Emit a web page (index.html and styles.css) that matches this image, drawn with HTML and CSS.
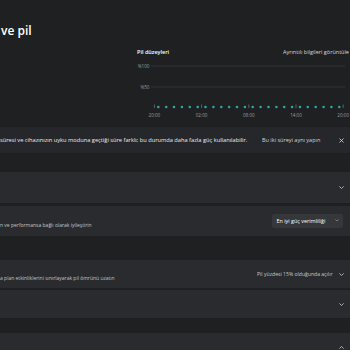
FILE: index.html
```html
<!DOCTYPE html>
<html>
<head>
  <title>Güç ve pil</title>
  <link rel="stylesheet" href="styles.css">
</head>
<body>
  <div class="top">
    <h1 class="title">ve pil</h1>

    <div class="chart">
      <div class="chart-head">
        <span class="chart-title">Pil düzeyleri</span>
        <span class="chart-link">Ayrıntılı bilgileri görüntüle</span>
      </div>
      <svg class="plot" width="213" height="60" viewBox="0 0 213 60">
        <text class="axis" x="12.5" y="7.6" text-anchor="end">%100</text>
        <line class="grid" x1="14" y1="6" x2="208" y2="6"/>
        <text class="axis" x="12.5" y="28.6" text-anchor="end">%50</text>
        <line class="grid" x1="14" y1="27" x2="208" y2="27"/>

        <g class="ticks">
          <line x1="17.4" y1="44.5" x2="17.4" y2="48"/>
          <line x1="64.6" y1="44.5" x2="64.6" y2="48"/>
          <line x1="111.8" y1="44.5" x2="111.8" y2="48"/>
          <line x1="159" y1="44.5" x2="159" y2="48"/>
          <line x1="206.2" y1="44.5" x2="206.2" y2="48"/>
        </g>

        <g class="dots">
          <circle cx="21.3" cy="47" r="1.3"/>
          <circle cx="29.2" cy="47" r="1.3"/>
          <circle cx="37" cy="47" r="1.3"/>
          <circle cx="44.9" cy="47" r="1.3"/>
          <circle cx="52.8" cy="47" r="1.3"/>
          <circle cx="60.7" cy="47" r="1.3"/>
          <circle cx="68.5" cy="47" r="1.3"/>
          <circle cx="76.4" cy="47" r="1.3"/>
          <circle cx="84.3" cy="47" r="1.3"/>
          <circle cx="92.1" cy="47" r="1.3"/>
          <circle cx="100" cy="47" r="1.3"/>
          <circle cx="107.9" cy="47" r="1.3"/>
          <circle cx="115.7" cy="47" r="1.3"/>
          <circle cx="123.6" cy="47" r="1.3"/>
          <circle cx="131.5" cy="47" r="1.3"/>
          <circle cx="139.4" cy="47" r="1.3"/>
          <circle cx="147.2" cy="47" r="1.3"/>
          <circle cx="155.1" cy="47" r="1.3"/>
          <circle cx="163" cy="47" r="1.3"/>
          <circle cx="170.8" cy="47" r="1.3"/>
          <circle cx="178.7" cy="47" r="1.3"/>
          <circle cx="186.6" cy="47" r="1.3"/>
          <circle cx="194.4" cy="47" r="1.3"/>
          <circle cx="202.3" cy="47" r="1.3"/>
        </g>

        <text class="axis" x="17.4" y="56.7" text-anchor="middle">20:00</text>
        <text class="axis" x="64.6" y="56.7" text-anchor="middle">02:00</text>
        <text class="axis" x="111.8" y="56.7" text-anchor="middle">08:00</text>
        <text class="axis" x="159" y="56.7" text-anchor="middle">14:00</text>
        <text class="axis" x="206.2" y="56.7" text-anchor="middle">20:00</text>
      </svg>
    </div>
  </div>

  <div class="banner">
    <span class="banner-text">süresi ve cihazınızın uyku moduna geçtiği süre farklı; bu durumda daha fazla güç kullanılabilir.</span>
    <span class="banner-action">Bu iki süreyi aynı yapın</span>
    <svg class="close" width="5" height="5" viewBox="0 0 5 5">
      <path d="M0.5 0.5L4.5 4.5M4.5 0.5L0.5 4.5"/>
    </svg>
  </div>

  <div class="cards">
    <div class="card card-a">
      <span class="desc"></span>
      <svg class="chevron" width="5" height="3" viewBox="0 0 5 3"><path d="M0.4 0.4L2.5 2.5L4.6 0.4"/></svg>
    </div>

    <div class="card card-b">
      <span class="desc">n ve performansa bağlı olarak iyileştirin</span>
      <div class="select">
        <span>En iyi güç verimliliği</span>
        <svg class="chevron small" width="4" height="2.5" viewBox="0 0 5 3"><path d="M0.4 0.4L2.5 2.5L4.6 0.4"/></svg>
      </div>
    </div>

    <div class="group">
      <div class="card card-c">
        <span class="desc">a plan etkinliklerini sınırlayarak pil ömrünü uzatın</span>
        <div class="right">
          <span class="status">Pil yüzdesi 15% olduğunda açılır</span>
          <svg class="chevron" width="5" height="3" viewBox="0 0 5 3"><path d="M0.4 0.4L2.5 2.5L4.6 0.4"/></svg>
        </div>
      </div>
      <div class="card card-d">
        <span class="desc"></span>
        <svg class="chevron" width="5" height="3" viewBox="0 0 5 3"><path d="M0.4 0.4L2.5 2.5L4.6 0.4"/></svg>
      </div>
    </div>

    <div class="card card-e">
      <span class="desc"></span>
      <svg class="chevron" width="5" height="3" viewBox="0 0 5 3"><path d="M0.4 2.6L2.5 0.5L4.6 2.6"/></svg>
    </div>
  </div>
</body>
</html>
```

FILE: styles.css
```css
body { margin: 0; width: 350px; height: 350px; overflow: hidden; background: #1f2022; color: #fff; font-family: "Open Sans", "Noto Sans", sans-serif; white-space: nowrap; }

.top { display: flex; height: 127px; }
.title { margin: 24px 0 0; padding-left: 1px; width: 136px; font-size: 12px; line-height: 14px; font-weight: 600; }

.chart { margin-top: 48px; width: 213px; }
.chart-head { display: grid; grid-template-columns: 146px auto; font-size: 5.5px; line-height: 8px; }
.chart-title { font-weight: 600; }
.chart-link { color: #d8d8d8; }
.plot { display: block; margin-top: 4px; overflow: visible; }
.axis { font-family: "Open Sans", sans-serif; font-size: 4.6px; fill: #9c9c9c; }
.grid { stroke: #3a3c3f; stroke-width: 0.7; }
.ticks line { stroke: #8a8a8a; stroke-width: 0.6; }
.dots circle { fill: #2fa5a1; }

.banner { display: grid; grid-template-columns: 262px 1fr auto; align-items: center; height: 26px; padding-right: 6px; background: #25272a; font-size: 5.7px; color: #ececec; }
.banner-action { color: #d4d4d4; font-size: 5.5px; }
.close path { stroke: #dcdcdc; stroke-width: 0.8; fill: none; }

.cards { display: flex; flex-direction: column; margin-top: 19px; }
.card { display: flex; align-items: center; justify-content: space-between; padding-right: 6.5px; background: #2a2b2e; }
.card-a { height: 31px; }
.card-b { height: 30px; margin-top: 3px; }
.group { display: flex; flex-direction: column; gap: 2px; margin-top: 24px; }
.card-c, .card-d { height: 28px; }
.card-e { height: 28px; margin-top: 15px; }

.desc { font-size: 5px; color: #c3c3c3; padding-top: 7px; }

.chevron path { stroke: #cfcfcf; stroke-width: 0.8; fill: none; }
.chevron.small path { stroke: #9a9a9a; }

.select { display: flex; align-items: center; justify-content: space-between; width: 71px; height: 14px; padding: 0 4px 0 5px; box-sizing: border-box; margin-top: -1px; margin-right: 1px; background: #35373a; border-radius: 2px; font-size: 5.4px; }

.right { display: flex; align-items: center; gap: 6px; }
.status { font-size: 5.1px; color: #c9c9c9; }
```
